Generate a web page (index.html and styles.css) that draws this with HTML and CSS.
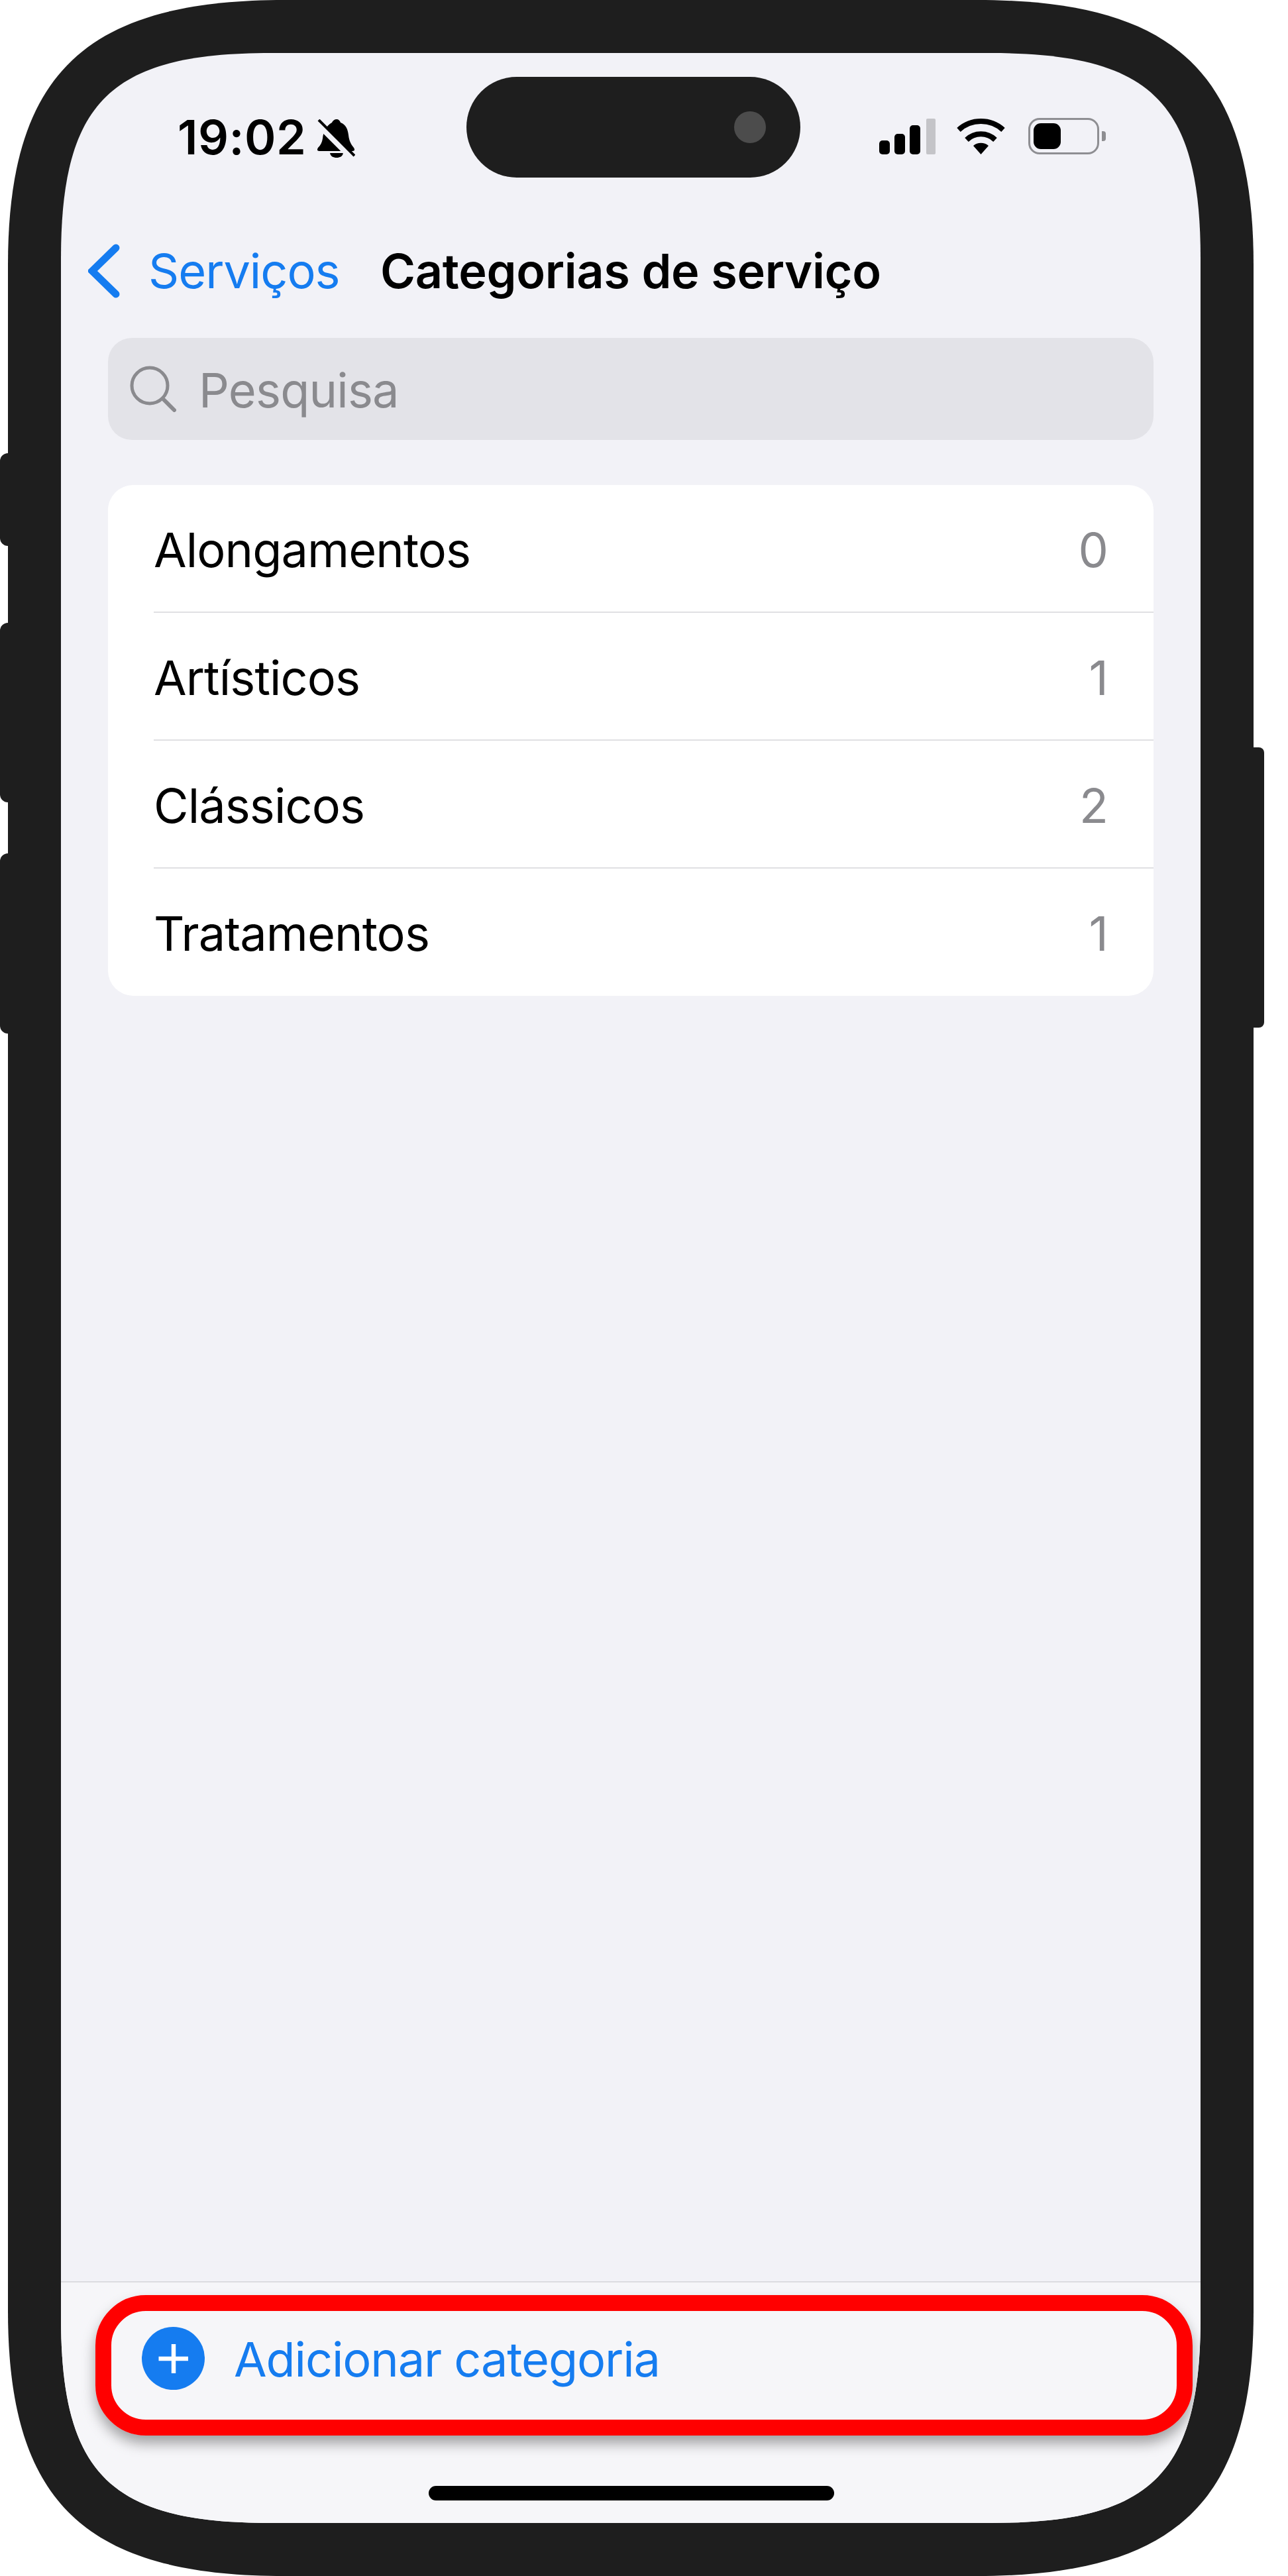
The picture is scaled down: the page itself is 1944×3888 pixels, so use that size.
FILE: index.html
```html
<!DOCTYPE html>
<html lang="pt">
<head>
    <meta charset="UTF-8">
    <meta name="viewport" content="width=device-width, initial-scale=1.0">
    <title>Categorias de serviço</title>
    <link rel="stylesheet" href="styles.css">
</head>
<body>
    <div class="device">
        <div class="side-btn mute"></div>
        <div class="side-btn vol-up"></div>
        <div class="side-btn vol-down"></div>
        <div class="side-btn power"></div>

        <div class="phone">
            <div class="screen">
                <div class="island"><span class="camera"></span></div>

                <div class="status">
                    <div class="status-left">
                        <span class="time">19:02</span>
                        <svg class="bell" width="58" height="58" viewBox="0 0 58 58">
                            <path d="M30 0c3 0 5 2 6 5 8 3 11 10 12 19 1 9 4 14 8 19 2 3 1 5-2 5H4c-3 0-4-2-2-5 4-4 6-8 7-14 1-10 5-19 14-24 1-3 4-5 7-5z" fill="#000"/>
                            <path d="M20 51h20c-1 5-5 7-10 7s-9-2-10-7z" fill="#000"/>
                            <path d="M-2 2L56 60" stroke="#f2f2f7" stroke-width="11"/>
                            <path d="M3 1L57 55" stroke="#000" stroke-width="4"/>
                        </svg>
                    </div>
                    <div class="status-right">
                        <div class="signal">
                            <span class="bar b1"></span>
                            <span class="bar b2"></span>
                            <span class="bar b3"></span>
                            <span class="bar b4"></span>
                        </div>
                        <svg class="wifi" width="73" height="55" viewBox="0 0 73 55">
                            <path d="M3 18A50 50 0 0 1 70 18" fill="none" stroke="#000" stroke-width="8"/>
                            <path d="M15 33A31 31 0 0 1 58 33" fill="none" stroke="#000" stroke-width="8"/>
                            <path d="M25 42A18 18 0 0 1 48 42L36.500 55z" fill="#000"/>
                        </svg>
                        <div class="battery">
                            <div class="battery-body"><span class="battery-fill"></span></div>
                            <span class="battery-nub"></span>
                        </div>
                    </div>
                </div>

                <div class="nav">
                    <svg class="chevron" width="48" height="82" viewBox="0 0 48 82">
                        <path d="M42 6L6 41L42 76" fill="none" stroke="#157cf0" stroke-width="11" stroke-linecap="round"/>
                    </svg>
                    <span class="nav-back">Serviços</span>
                    <span class="nav-title">Categorias de serviço</span>
                </div>

                <div class="search">
                    <svg width="70" height="70" viewBox="0 0 70 70">
                        <circle cx="30" cy="30" r="27" fill="none" stroke="#8a8a8e" stroke-width="5"/>
                        <path d="M50 50L67 67" stroke="#8a8a8e" stroke-width="6" stroke-linecap="round"/>
                    </svg>
                    <span class="search-text">Pesquisa</span>
                </div>

                <div class="card">
                    <div class="row"><span>Alongamentos</span><span class="count">0</span></div>
                    <div class="row"><span>Artísticos</span><span class="count">1</span></div>
                    <div class="row"><span>Clássicos</span><span class="count">2</span></div>
                    <div class="row"><span>Tratamentos</span><span class="count">1</span></div>
                </div>

                <div class="spacer"></div>

                <div class="footer">
                    <div class="add-box">
                        <svg width="95" height="95" viewBox="0 0 95 95">
                            <circle cx="47.500" cy="47.500" r="47.500" fill="#157cf0"/>
                            <path d="M25.500 48H70M48 26V70" stroke="#fff" stroke-width="6.500"/>
                        </svg>
                        <span class="add-text">Adicionar categoria</span>
                    </div>
                    <div class="home-bar"></div>
                </div>
            </div>
        </div>
    </div>
</body>
</html>
```

FILE: styles.css
```css
body {
    margin: 0;
    background: #fff;
    font-family: Inter, "Liberation Sans", sans-serif;
    color: #000;
}

.device {
    position: relative;
    width: 1944px;
    height: 3888px;
    overflow: hidden;
}

.side-btn {
    position: absolute;
    left: 0;
    width: 14px;
    background: #1e1e1e;
    border-radius: 12px 0 0 12px;
}
.mute { top: 684px; height: 140px; }
.vol-up { top: 940px; height: 271px; }
.vol-down { top: 1288px; height: 272px; }
.power {
    left: 1890px;
    top: 1128px;
    width: 18px;
    height: 423px;
    border-radius: 0 8px 8px 0;
}

.phone {
    width: 1880px;
    height: 3888px;
    margin-left: 12px;
    padding: 80px;
    box-sizing: border-box;
    background: #1e1e1e;
    clip-path: path("M0 400C0 110 118 0 418 0L1462 0C1762 0 1880 110 1880 400L1880 3488C1880 3778 1762 3888 1462 3888L418 3888C118 3888 0 3778 0 3488Z");
}

.screen {
    position: relative;
    display: flex;
    flex-direction: column;
    height: 3728px;
    background: #f2f2f7;
    clip-path: path("M0 310C0 70 78 0 318 0L1402 0C1642 0 1720 70 1720 310L1720 3418C1720 3658 1642 3728 1402 3728L318 3728C78 3728 0 3658 0 3418Z");
}

.island {
    position: absolute;
    left: 612px;
    top: 36px;
    display: flex;
    align-items: center;
    justify-content: flex-end;
    width: 504px;
    height: 152px;
    padding-right: 52px;
    box-sizing: border-box;
    background: #1e1e1e;
    border-radius: 76px;
}
.camera {
    width: 48px;
    height: 48px;
    background: #4c4c4c;
    border-radius: 50%;
}

/* status bar */
.status {
    display: flex;
    justify-content: space-between;
    height: 192px;
    padding: 98px 143px 0 176px;
    box-sizing: border-box;
}
.status-left {
    display: flex;
    align-items: flex-start;
    gap: 16px;
}
.time {
    font-size: 72px;
    font-weight: 600;
    line-height: 58px;
    letter-spacing: 0.5px;
}
.bell {
    margin-top: 2px;
}
.status-right {
    display: flex;
    align-items: flex-start;
    gap: 32px;
}
.signal {
    display: flex;
    align-items: flex-end;
    gap: 7px;
    height: 55px;
}
.bar {
    width: 16px;
    background: #000;
    border-radius: 5px;
}
.b1 { height: 21px; }
.b2 { height: 31px; }
.b3 { height: 44px; }
.b4 { height: 54px; width: 14px; margin-left: 2px; background: #c4c4c8; border-radius: 2px; }
.battery {
    display: flex;
    align-items: center;
    gap: 4px;
    margin-left: 3px;
}
.battery-body {
    width: 107px;
    height: 55px;
    padding: 5px;
    box-sizing: border-box;
    border: 3px solid #8e8e92;
    border-radius: 17px;
}
.battery-fill {
    display: block;
    width: 41px;
    height: 39px;
    background: #000;
    border-radius: 11px;
}
.battery-nub {
    width: 6px;
    height: 15px;
    background: #8e8e92;
    border-radius: 0 4px 4px 0;
}

/* navigation */
.nav {
    display: flex;
    align-items: center;
    height: 82px;
    margin-top: 96px;
    padding-left: 41px;
    font-size: 72px;
    line-height: 82px;
}
.nav-back {
    width: 350px;
    margin-left: 43px;
    color: #157cf0;
    letter-spacing: -1px;
}
.nav-title {
    font-weight: 600;
    letter-spacing: -0.3px;
}

.search {
    display: flex;
    align-items: center;
    gap: 34px;
    height: 154px;
    margin: 60px 71px 0;
    padding-left: 33px;
    box-sizing: border-box;
    background: #e3e3e8;
    border-radius: 36px;
}
.search-text {
    padding-top: 4px;
    font-size: 72px;
    line-height: 84px;
    color: #8a8a8e;
    letter-spacing: -0.8px;
}

.card {
    margin: 68px 71px 0;
    background: #fff;
    border-radius: 38px;
    font-size: 72px;
}
.row {
    display: flex;
    align-items: center;
    justify-content: space-between;
    height: 193px;
    margin-left: 69px;
    padding: 3px 69px 0 0;
    box-sizing: border-box;
    border-bottom: 2px solid #e0e0e3;
    letter-spacing: -0.9px;
}
.row:last-child {
    height: 192px;
    border-bottom: none;
}
.count {
    color: #8a8a8e;
}

.spacer {
    flex: 1;
}

.footer {
    display: flex;
    flex-direction: column;
    height: 365px;
    padding-top: 19px;
    box-sizing: border-box;
    border-top: 2px solid #dcdce0;
    background: #f6f6f9;
}
.add-box {
    display: flex;
    align-items: flex-start;
    gap: 44px;
    width: 1656px;
    height: 212px;
    margin-left: 52px;
    padding: 24px 0 0 46px;
    box-sizing: border-box;
    border: 24px solid #f00;
    border-radius: 76px;
    box-shadow: 0 12px 20px rgba(0, 0, 0, 0.35);
}
.add-text {
    padding-top: 1px;
    font-size: 72px;
    line-height: 96px;
    color: #157cf0;
    letter-spacing: -1.1px;
}
.home-bar {
    width: 612px;
    height: 22px;
    margin: 76px 0 0 555px;
    background: #000;
    border-radius: 11px;
}
```
